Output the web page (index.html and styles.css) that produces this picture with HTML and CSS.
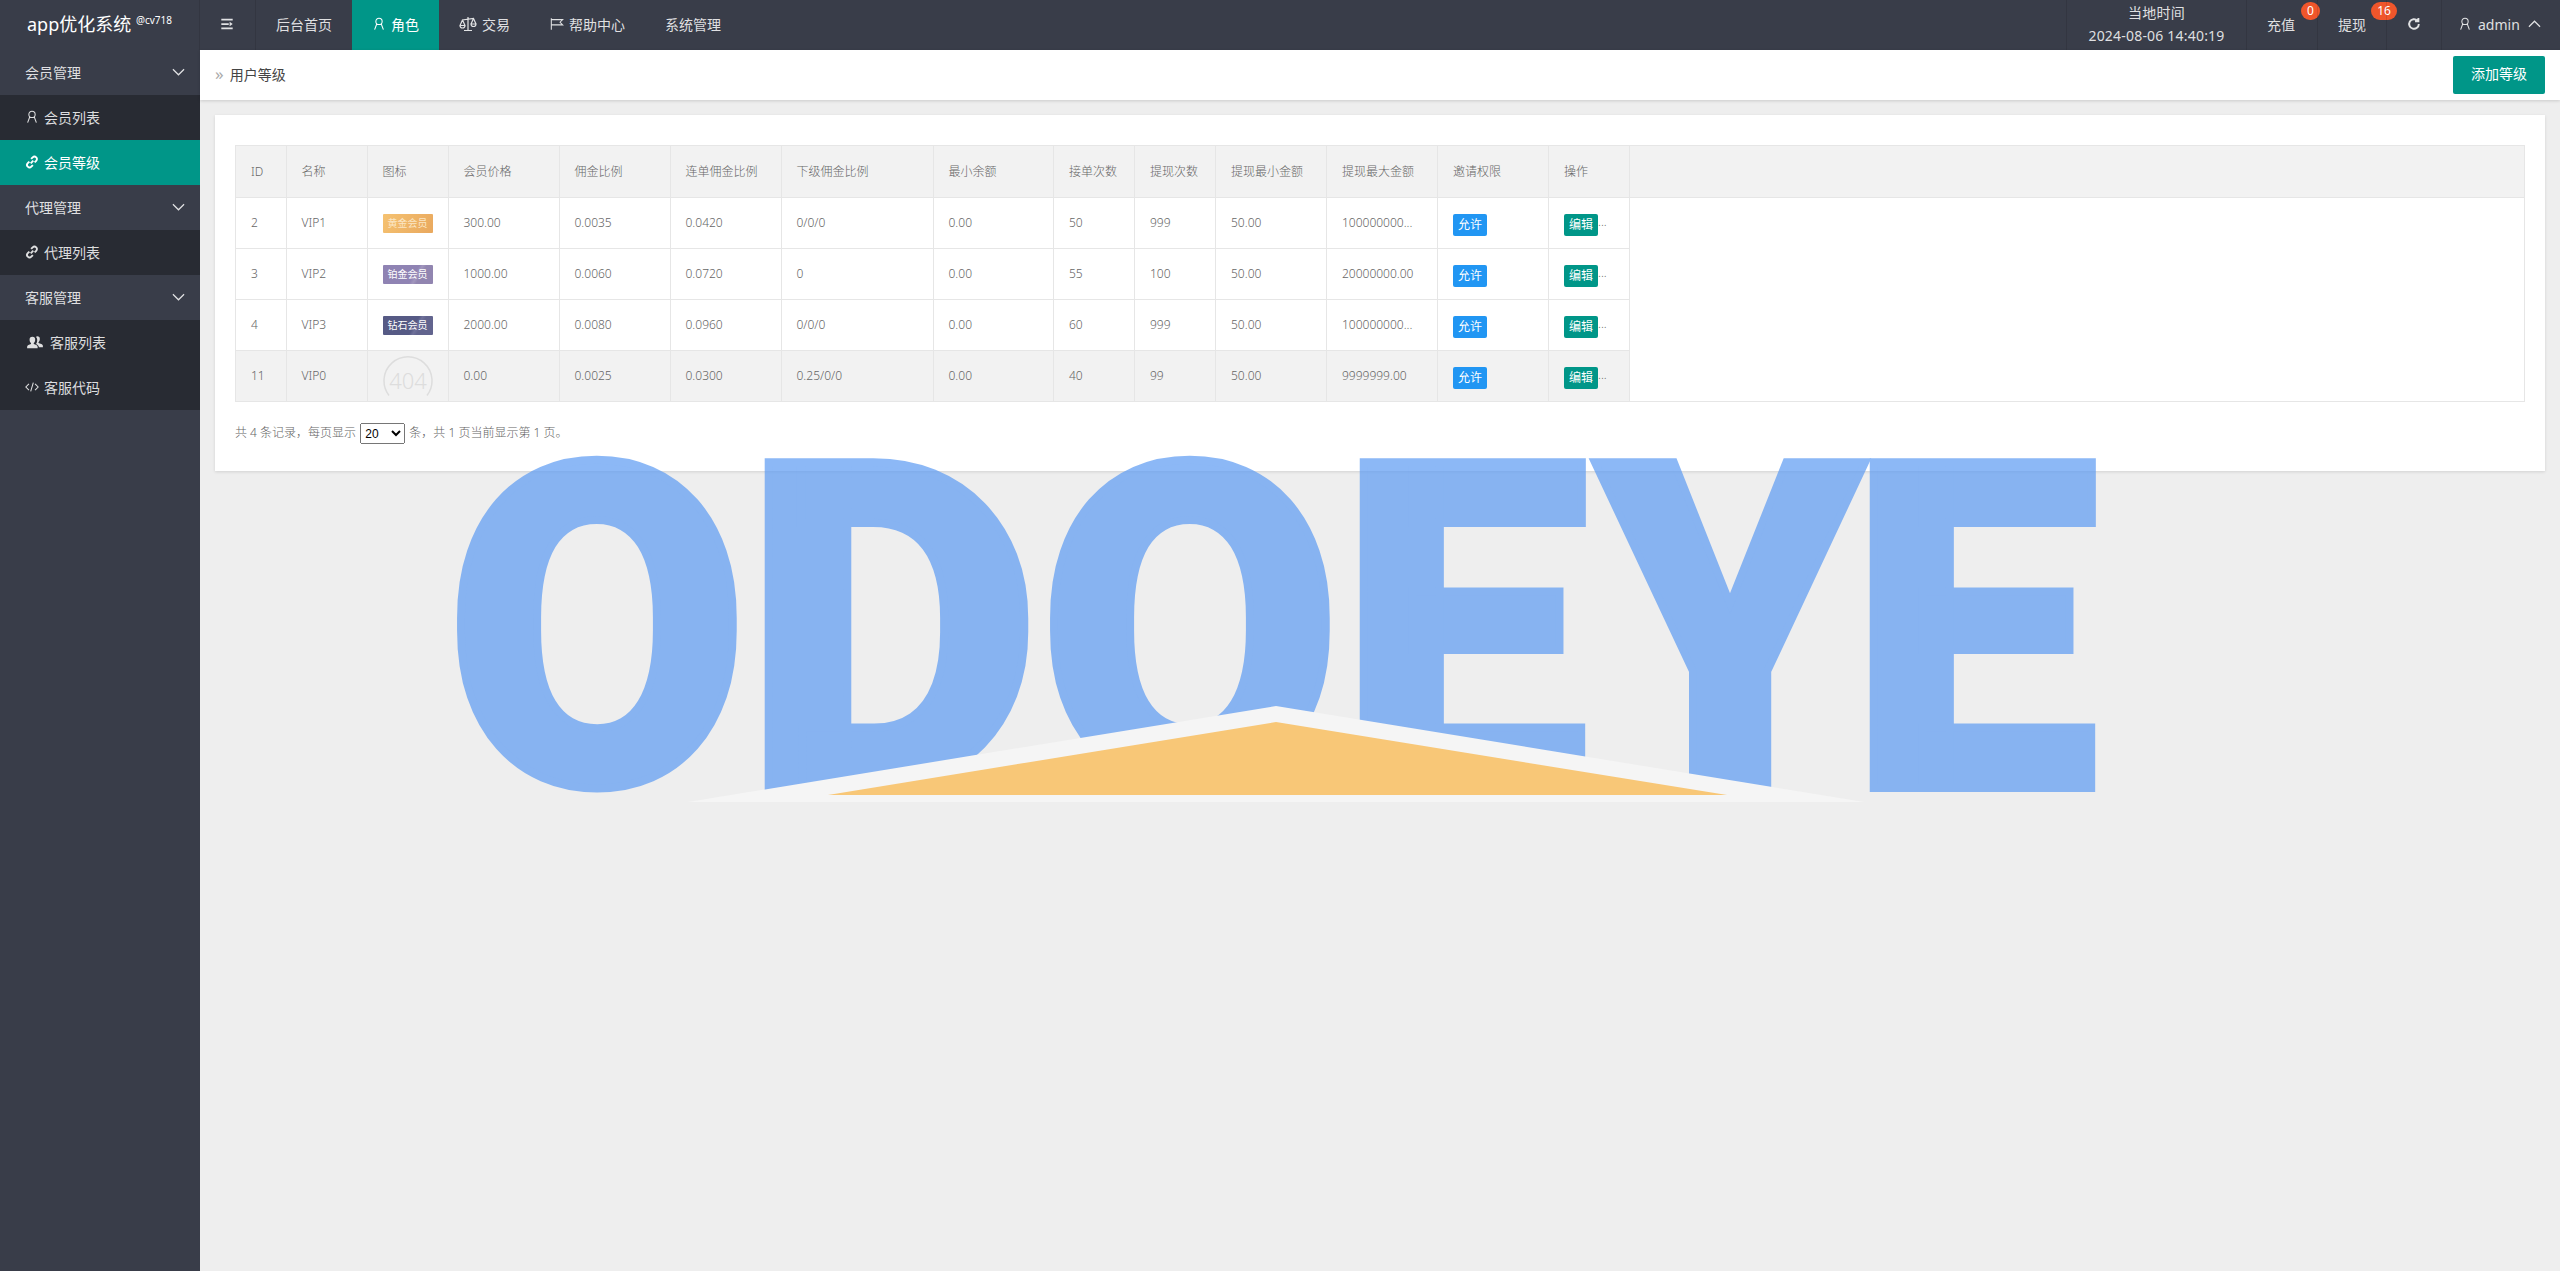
FILE: index.html
```html
<!DOCTYPE html>
<html lang="zh">
<head>
  <meta charset="utf-8">
  <title>app优化系统</title>
  <link rel="stylesheet" href="styles.css">
</head>
<body>

  <header class="topbar">
    <div class="logo">app优化系统 <sup>@cv718</sup></div>
    <ul class="nav">
      <li class="nav-toggle">
        <svg class="ic" viewBox="0 0 16 16"><path d="M1.500 2h13v2h-13zM1.500 7h8.500v2H1.500zM1.500 12h13v2h-13zM11 5.500 14.500 8 11 10.500z"/></svg>
      </li>
      <li>后台首页</li>
      <li class="active">
        <svg class="ic line" viewBox="0 0 16 16"><circle cx="8" cy="5" r="3.600"/><path d="M5.400 8 3 14.500M10.600 8l2.400 6.500"/></svg>角色
      </li>
      <li>
        <svg class="ic line big" viewBox="0 0 18 16"><path d="M9 1v13M5 14.500h8M3 4l12-1.600M3.500 4 1 9.500M3.500 4 6 9.500M1 9.500a2.500 2.500 0 0 0 5 0zM14.500 2.500 12 8M14.500 2.500 17 8M12 8a2.500 2.500 0 0 0 5 0z"/></svg>交易
      </li>
      <li>
        <svg class="ic line" viewBox="0 0 16 16"><path d="M1.500 1.500v13M1.500 3h13l-3 3 3 3h-13"/></svg>帮助中心
      </li>
      <li>系统管理</li>
    </ul>
    <ul class="nav nav-right">
      <li class="clock"><span>当地时间</span><span>2024-08-06 14:40:19</span></li>
      <li class="pay">充值<b class="badge">0</b></li>
      <li class="pay">提现<b class="badge wide">16</b></li>
      <li class="refresh">
        <svg class="ic line thick" viewBox="0 0 16 16"><path d="M13.500 8a5.500 5.500 0 1 1-1.600-3.900M13 1v3.800H9.200"/></svg>
      </li>
      <li class="user">
        <svg class="ic line" viewBox="0 0 16 16"><circle cx="8" cy="5" r="3.600"/><path d="M5.400 8 3 14.500M10.600 8l2.400 6.500"/></svg>admin
        <svg class="chev up" viewBox="0 0 14 8"><path d="M1 7l6-6 6 6"/></svg>
      </li>
    </ul>
  </header>

  <div class="layout">
    <aside class="sidebar">
      <div class="group">会员管理<svg class="chev" viewBox="0 0 14 8"><path d="M1 1l6 6 6-6"/></svg></div>
      <a class="item">
        <svg class="ic line" viewBox="0 0 16 16"><circle cx="8" cy="5" r="3.600"/><path d="M5.400 8 3 14.500M10.600 8l2.400 6.500"/></svg>会员列表
      </a>
      <a class="item current">
        <svg class="ic link" viewBox="0 0 16 16"><path d="M6.500 9.500l3-3M7 4.500l1.800-1.800a2.800 2.800 0 0 1 4 4L11 8.500M9 11.500l-1.800 1.800a2.800 2.800 0 0 1-4-4L5 7.500"/></svg>会员等级
      </a>
      <div class="group">代理管理<svg class="chev" viewBox="0 0 14 8"><path d="M1 1l6 6 6-6"/></svg></div>
      <a class="item">
        <svg class="ic link" viewBox="0 0 16 16"><path d="M6.500 9.500l3-3M7 4.500l1.800-1.800a2.800 2.800 0 0 1 4 4L11 8.500M9 11.500l-1.800 1.800a2.800 2.800 0 0 1-4-4L5 7.500"/></svg>代理列表
      </a>
      <div class="group">客服管理<svg class="chev" viewBox="0 0 14 8"><path d="M1 1l6 6 6-6"/></svg></div>
      <a class="item">
        <svg class="ic wide" viewBox="0 0 20 16"><path d="M7 2a3.200 3.200 0 0 1 3.200 3.400c0 1.500-.6 3-1.600 3.700v1.100c2 .8 4.400 1.500 4.400 3.300V15H1v-1.500c0-1.800 2.400-2.500 4.400-3.300V9.100c-1-.7-1.600-2.200-1.600-3.700A3.200 3.200 0 0 1 7 2zM12.500 1.500a3 3 0 0 1 3 3.200c0 1.400-.5 2.800-1.500 3.500v1c1.800.8 5 1.300 5 3.100V14h-4.500c0-2-1.800-3-3.400-3.800 1-1 1.500-2.900 1.400-4.800 0-1.300-.5-2.400-1.300-3.200.2-.4.6-.7 1.300-.7z"/></svg>客服列表
      </a>
      <a class="item">
        <svg class="ic line" viewBox="0 0 16 16"><path d="M4.500 4.500 1 8l3.500 3.500M11.500 4.500 15 8l-3.500 3.500M9.500 3l-3 10"/></svg>客服代码
      </a>
    </aside>

    <main class="main">
      <div class="crumb">
        <span class="crumb-text"><i>»</i>用户等级</span>
        <a class="btn-add">添加等级</a>
      </div>

      <section class="card">
        <div class="table-box">
          <table class="levels">
            <colgroup>
              <col class="w51"><col class="w81"><col class="w81"><col class="w111"><col class="w111"><col class="w111"><col class="w152"><col class="w120"><col class="w81"><col class="w81"><col class="w111"><col class="w111"><col class="w111"><col class="w81"><col>
            </colgroup>
            <thead>
              <tr>
                <th>ID</th><th>名称</th><th>图标</th><th>会员价格</th><th>佣金比例</th><th>连单佣金比例</th><th>下级佣金比例</th><th>最小余额</th><th>接单次数</th><th>提现次数</th><th>提现最小金额</th><th>提现最大金额</th><th>邀请权限</th><th>操作</th><th></th>
              </tr>
            </thead>
            <tbody>
              <tr>
                <td>2</td><td>VIP1</td><td><span class="medal gold">黄金会员</span></td><td>300.00</td><td>0.0035</td><td>0.0420</td><td>0/0/0</td><td>0.00</td><td>50</td><td>999</td><td>50.00</td><td>100000000...</td>
                <td><span class="tag allow">允许</span></td><td><span class="tag edit">编辑</span>...</td><td class="blank"></td>
              </tr>
              <tr>
                <td>3</td><td>VIP2</td><td><span class="medal plat">铂金会员</span></td><td>1000.00</td><td>0.0060</td><td>0.0720</td><td>0</td><td>0.00</td><td>55</td><td>100</td><td>50.00</td><td>20000000.00</td>
                <td><span class="tag allow">允许</span></td><td><span class="tag edit">编辑</span>...</td><td class="blank"></td>
              </tr>
              <tr>
                <td>4</td><td>VIP3</td><td><span class="medal dia">钻石会员</span></td><td>2000.00</td><td>0.0080</td><td>0.0960</td><td>0/0/0</td><td>0.00</td><td>60</td><td>999</td><td>50.00</td><td>100000000...</td>
                <td><span class="tag allow">允许</span></td><td><span class="tag edit">编辑</span>...</td><td class="blank"></td>
              </tr>
              <tr class="hover">
                <td>11</td><td>VIP0</td>
                <td class="nopic">
                  <svg class="pic404" viewBox="0 0 50 40"><path d="M6 39.500A24 24 0 1 1 44 39.500"/><text x="25" y="33">404</text></svg>
                </td>
                <td>0.00</td><td>0.0025</td><td>0.0300</td><td>0.25/0/0</td><td>0.00</td><td>40</td><td>99</td><td>50.00</td><td>9999999.00</td>
                <td><span class="tag allow">允许</span></td><td><span class="tag edit">编辑</span>...</td><td class="blank"></td>
              </tr>
            </tbody>
          </table>
        </div>
        <div class="pager">
          共 4 条记录，每页显示
          <select class="page-size"><option>20</option><option>50</option></select>
          条，共 1 页当前显示第 1 页。
        </div>
      </section>
    </main>
  </div>

  <svg class="watermark" viewBox="0 0 2560 1271">
    <g class="wm-letters">
      <text transform="translate(597 784) scale(.972 1)">O</text>
      <text transform="translate(892 788) scale(1.017 1.018)">D</text>
      <text transform="translate(1190 784) scale(.972 1)">O</text>
      <text transform="translate(1464 788) scale(.988 1.018)">E</text>
      <text transform="translate(1730 788) scale(.951 1.018)">Y</text>
      <text transform="translate(1974 788) scale(.988 1.018)">E</text>
    </g>
    <polygon class="wm-roof" points="688,802 1276,706 1864,802"/>
    <polygon class="wm-sun" points="828,795 1276,722 1727,795"/>
  </svg>

</body>
</html>
```

FILE: styles.css
```css
* { box-sizing: border-box; }

html, body { height: 100%; }

body {
  margin: 0;
  overflow: hidden;
  position: relative;
  font-family: "Noto Sans", "Noto Sans CJK SC", sans-serif;
  font-size: 14px;
  color: #666;
  background: #eee;
}

ul { list-style: none; margin: 0; padding: 0; }

/* top bar */
.topbar {
  display: flex;
  height: 50px;
  background: #393d49;
  color: rgba(255,255,255,.85);
}

.logo {
  width: 200px;
  padding-left: 27px;
  font-size: 18px;
  line-height: 48px;
  color: #fff;
  border-right: 1px solid rgba(0,0,0,.1);
  white-space: nowrap;
}

.logo sup { font-size: 10px; vertical-align: 7px; line-height: 0; }

.nav { display: flex; }

.nav li {
  display: flex;
  align-items: center;
  padding: 0 20px 2px;
  white-space: nowrap;
}

.nav .active { background: #009688; color: #fff; }

.nav .nav-toggle { width: 56px; border-right: 1px solid rgba(0,0,0,.1); }
.nav-toggle .ic { margin-right: 0; }

.nav-right { margin-left: auto; }

.nav-right li { border-left: 1px solid rgba(0,0,0,.1); position: relative; }

.nav .clock {
  flex-direction: column;
  justify-content: center;
  align-items: center;
  width: 180px;
  line-height: 23px;
  letter-spacing: .2px;
}

.nav .pay { width: 71px; padding: 0 0 2px 20px; }
.nav .pay + .pay { width: 69px; }

.badge {
  position: absolute;
  top: 2px;
  right: -3px;
  width: 19px;
  height: 18px;
  border-radius: 10px;
  background: #f0562b;
  color: #fff;
  font-size: 12px;
  font-weight: 400;
  line-height: 18px;
  text-align: center;
}

.badge.wide { width: 26px; right: -11px; }

.nav .refresh { width: 55px; padding: 0 0 2px 20px; }
.nav .user { width: 119px; padding: 0 0 2px 16px; }
.user .ic { margin-right: 6px; }

.ic { width: 14px; height: 14px; margin-right: 5px; fill: currentColor; flex: none; }
.ic.line { fill: none; stroke: currentColor; stroke-width: 1.2; }
.ic.big { width: 18px; height: 16px; }
.ic.thick { stroke-width: 2.200; }
.ic.link { fill: none; stroke: currentColor; stroke-width: 2.200; }
.ic.wide { width: 20px; }

.chev { width: 13px; height: 8px; fill: none; stroke: currentColor; stroke-width: 1.3; }
.chev.up { margin-left: 8px; }

/* sidebar + content */
.layout { display: flex; height: calc(100% - 50px); }

.sidebar { width: 200px; flex: none; background: #393d49; color: rgba(255,255,255,.85); }

.group, .item {
  display: flex;
  align-items: center;
  height: 45px;
  padding: 0 0 2px 25px;
  white-space: nowrap;
}

.group { justify-content: space-between; padding-right: 15px; }

.item { background: #282b33; }
.item.current { background: #009688; color: #fff; }

.main { flex: 1; min-width: 0; }

.crumb {
  display: flex;
  align-items: center;
  justify-content: space-between;
  height: 50px;
  padding: 0 15px;
  background: #fff;
  color: #444;
  box-shadow: 0 1px 3px rgba(0,0,0,.15);
}

.crumb-text { padding-bottom: 3px; }
.crumb-text i { font-style: normal; font-size: 17px; color: #aaa; margin-right: 6px; }

.btn-add {
  width: 92px;
  height: 38px;
  border-radius: 2px;
  background: #009688;
  color: #fff;
  line-height: 36px;
  text-align: center;
}

.card {
  margin: 15px 15px 0;
  height: 356px;
  padding: 30px 20px 0;
  background: #fff;
  box-shadow: 0 1px 3px rgba(0,0,0,.12);
}

.table-box { border: 1px solid #e6e6e6; }

.levels {
  width: 100%;
  table-layout: fixed;
  border-collapse: collapse;
  font-size: 12px;
  font-weight: 300;
  color: #666;
}

.w51 { width: 50px; }
.w81 { width: 81px; }
.w111 { width: 111px; }
.w120 { width: 120.500px; }
.w152 { width: 152px; }

.levels th, .levels td {
  height: 51px;
  padding: 0 15px;
  border: 1px solid #e6e6e6;
  font-weight: 300;
  text-align: left;
  white-space: nowrap;
  overflow: hidden;
}

.levels tr > :first-child { border-left: 0; }
.levels tr > :last-child { border-right: 0; }
.levels thead th { border-top: 0; background: #f2f2f2; }
.levels tbody tr:last-child td { border-bottom: 0; }
.levels .hover td { background: #f2f2f2; }
.levels td.blank { border: 0; background: #fff !important; }

.medal {
  display: block;
  width: 50px;
  height: 19px;
  margin-top: 2px;
  border-radius: 1px;
  color: #fff;
  font-size: 10px;
  font-weight: 400;
  line-height: 19px;
  text-align: center;
}

.gold { background: linear-gradient(120deg, #f5c271, #e9a85e); color: #fbe6c4; }
.plat { background: linear-gradient(120deg, #8f83b3 60%, #a196bd 66%, #9185b0 72%); }
.dia { background: linear-gradient(120deg, #565a85 60%, #6f719a 66%, #62648e 72%); }

.levels .nopic { padding-top: 0; padding-bottom: 0; vertical-align: bottom; }
.pic404 { display: block; width: 50px; height: 40px; margin-bottom: 5px; fill: none; stroke: #ddd; stroke-width: 1.5; }
.pic404 text {
  fill: #ddd;
  stroke: none;
  font-size: 22px;
  font-weight: 300;
  text-anchor: middle;
}

.tag {
  display: inline-block;
  width: 34px;
  height: 22px;
  margin-top: 4px;
  border-radius: 2px;
  color: #fff;
  font-weight: 400;
  line-height: 22px;
  text-align: center;
  vertical-align: middle;
}

.allow { background: #2196f3; }
.edit { background: #009688; }

.pager { margin-top: 21px; font-size: 12px; font-weight: 300; color: #666; }

.page-size { width: 45px; height: 21px; margin: 0 1px; font-size: 12px; vertical-align: middle; }

/* watermark logo laid over the page */
.watermark {
  position: absolute;
  left: 0;
  top: 0;
  width: 2560px;
  height: 1271px;
  pointer-events: none;
}

.wm-letters { opacity: .7; }

.wm-letters text {
  font-family: Roboto, sans-serif;
  font-size: 450px;
  font-weight: 900;
  text-anchor: middle;
  fill: rgb(92,155,243);
  stroke: rgb(92,155,243);
  stroke-width: 8;
  stroke-linejoin: miter;
}

.wm-roof { fill: #f5f5f5; }
.wm-sun { fill: #f8c777; }
```
